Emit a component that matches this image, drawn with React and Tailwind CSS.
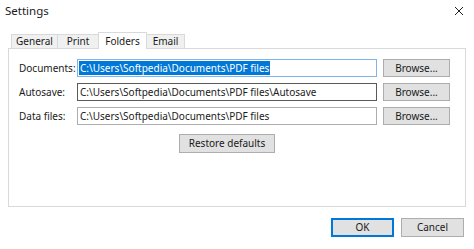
import React from 'react';

const font = { fontFamily: '"Noto Sans", "Open Sans", sans-serif' };

function Tab({ label, active, w }) {
  if (active) {
    return (
      <div className={`${w} h-[17px] -ml-px z-10 bg-white border border-b-0 border-[#d9d9d9] flex items-start justify-center pt-[1px]`}>
        {label}
      </div>
    );
  }
  return (
    <div className={`${w} h-[14px] mb-px -ml-px first:ml-0 bg-[#f0f0f0] border border-b-0 border-[#d9d9d9] flex items-center justify-center`}>
      {label}
    </div>
  );
}

function Row({ label, value, selected, border }) {
  return (
    <div className="flex items-center h-[18px]">
      <div className="w-[58px] shrink-0">{label}</div>
      <div className={`w-[300px] h-[18px] border ${border} bg-white flex items-center pl-[1px] whitespace-nowrap overflow-hidden`}>
        {selected ? (
          <span className="bg-[#0078d7] text-white px-[1px] leading-[14px]">{value}</span>
        ) : (
          <span className="px-[1px]">{value}</span>
        )}
      </div>
      <button className="ml-[6px] w-[67px] h-[18px] bg-[#e1e1e1] border border-[#adadad] flex items-center justify-center">
        Browse...
      </button>
    </div>
  );
}

export default function App() {
  return (
    <div className="w-[474px] h-[249px] bg-white text-[10px] text-[#1a1a1a] flex flex-col overflow-hidden" style={font}>
      {/* title bar */}
      <div className="h-[22px] flex items-center justify-between pl-[5px] pr-[10px] text-[11.5px]">
        <span>Settings</span>
        <svg width="10" height="10" viewBox="0 0 10 10">
          <path d="M1 1 L9 9 M9 1 L1 9" stroke="#222" strokeWidth="1" />
        </svg>
      </div>

      {/* tabs */}
      <div className="mt-[10px] ml-[11px] flex items-end h-[17px] -mb-px relative z-10">
        <Tab label="General" w="w-[47px]" />
        <Tab label="Print" w="w-[42px]" />
        <Tab label="Folders" w="w-[49px]" active />
        <Tab label="Email" w="w-[39px]" />
      </div>

      {/* panel */}
      <div className="mx-[8px] h-[159px] border border-[#d9d9d9] bg-white pt-[10px] pl-[10px] flex flex-col gap-[6px]">
        <Row label="Documents:" value="C:\Users\Softpedia\Documents\PDF files" selected border="border-[#7eb4ea]" />
        <Row label="Autosave:" value="C:\Users\Softpedia\Documents\PDF files\Autosave" border="border-[#5a5a5a]" />
        <Row label="Data files:" value="C:\Users\Softpedia\Documents\PDF files" border="border-[#adadad]" />
        <div className="flex mt-[3px]">
          <div className="w-[58px] shrink-0" />
          <div className="w-[300px] flex justify-center">
            <button className="w-[96px] h-[19px] bg-[#e1e1e1] border border-[#adadad] flex items-center justify-center">
              Restore defaults
            </button>
          </div>
        </div>
      </div>

      {/* footer */}
      <div className="mt-[11px] flex justify-end gap-[7px] pr-[10px]">
        <button className="w-[63px] h-[19px] bg-[#e1e1e1] border-2 border-[#0078d7] flex items-center justify-center">
          OK
        </button>
        <button className="w-[63px] h-[19px] bg-[#e1e1e1] border border-[#adadad] flex items-center justify-center">
          Cancel
        </button>
      </div>
    </div>
  );
}
